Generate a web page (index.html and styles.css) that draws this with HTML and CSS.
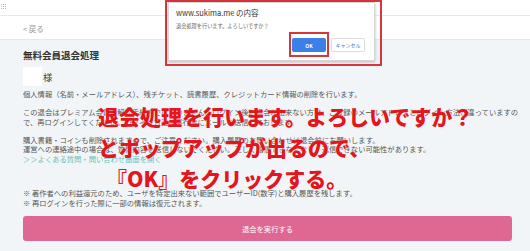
FILE: index.html
```html
<!DOCTYPE html>
<html lang="ja">
<head>
<meta charset="UTF-8">
<title>無料会員退会処理</title>
<meta name="viewport" content="width=device-width, initial-scale=1.0">
<link rel="stylesheet" href="styles.css">
</head>
<body>
<div class="topbar">
<svg class="apps" width="5" height="5" viewBox="0 0 5 5">
<g fill="#b9b9b9">
<rect x="0" y="0" width="1" height="1"/><rect x="2" y="0" width="1" height="1"/><rect x="4" y="0" width="1" height="1"/>
<rect x="0" y="2" width="1" height="1"/><rect x="2" y="2" width="1" height="1"/><rect x="4" y="2" width="1" height="1"/>
<rect x="0" y="4" width="1" height="1"/><rect x="2" y="4" width="1" height="1"/><rect x="4" y="4" width="1" height="1"/>
</g>
</svg>
</div>
<div class="backbar"><span class="back">&lt; 戻る</span></div>

<main class="content">
<h1 class="title">無料会員退会処理</h1>
<div class="name-row"><span class="name-box"></span><span class="sama">様</span></div>

<p class="text">個人情報（名前・メールアドレス）、残チケット、読書履歴、クレジットカード情報の削除を行います。</p>
<p class="text gap">この退会はプレミアム会員の解約手続きではありません。ログイン後に退会が出来ない方は、ご登録のメールアドレスとログイン方法が違っていますの<br>で、再ログインしてください。ログイン方法は実行時にメールを送信しております。</p>
<p class="text gap">購入書籍・コインも削除されますので、ご注意ください。購入履歴のお問い合わせは退会前にお願いします。<br>運営への連絡途中の場合は、質問内容を送信しないでください。正しく返信できなくなり、返信できない可能性があります。<br><span class="link">＞＞よくある質問・問い合わせ画面を開く</span></p>

<p class="text notes">※ 著作者への利益還元のため、ユーザを特定出来ない範囲でユーザーID(数字)と購入履歴を残します。<br>※ 再ログインを行った際に一部の情報は復元されます。</p>

<button class="withdraw">退会を実行する</button>
</main>

<!-- ブラウザの確認ダイアログ（赤枠付き） -->
<div class="callout">
<div class="dialog">
<div class="dialog-title">www.sukima.me の内容</div>
<div class="dialog-msg">退会処理を行います。よろしいですか？</div>
<div class="dialog-buttons">
<span class="ok-mark"><button class="btn-ok">OK</button></span>
<button class="btn-cancel">キャンセル</button>
</div>
</div>
</div>

<div class="annotation">
<p>退会処理を行います。よろしいですか？</p>
<p>とポップアップが出るので、</p>
<p class="indent">『OK』をクリックする。</p>
</div>
</body>
</html>
```

FILE: styles.css
```css
html {
background: #f2f5f8;
}

body {
margin: 0;
height: 251px;
overflow: hidden;
font-family: "Noto Sans CJK JP", "Noto Sans", sans-serif;
color: #555;
position: relative;
}

.topbar {
height: 16px;
background: white;
border-bottom: 1px solid #e8e8e8;
display: flex;
align-items: center;
padding-left: 1px;
box-sizing: border-box;
}

.apps {
display: block;
margin-top: -2px;
}

.backbar {
height: 24px;
background: white;
border-bottom: 1px solid #e6e9ec;
display: flex;
align-items: center;
padding-left: 23px;
box-sizing: border-box;
}

.back {
font-size: 7.5px;
color: #999;
padding-top: 2px;
}

.content {
padding: 9px 18px 0 23px;
}

.title {
font-size: 9.5px;
line-height: 12px;
font-weight: bold;
color: #333;
margin: 0;
}

.name-row {
display: flex;
align-items: center;
margin-top: 6px;
}

.name-box {
width: 19px;
height: 19px;
background: white;
}

.sama {
font-size: 9.5px;
color: #444;
margin-left: 1px;
}

.text {
font-size: 7.3px;
line-height: 9.5px;
margin: 4px 0 0;
white-space: nowrap;
}

.gap {
margin-top: 8.5px;
}

.link {
color: #63c2bc;
}

.notes {
margin-top: 24px;
line-height: 10px;
}

.withdraw {
display: block;
width: 100%;
height: 25px;
margin-top: 8px;
border: none;
border-radius: 3px;
background: #de6891;
color: white;
font-family: inherit;
font-size: 7.3px;
}

/* 確認ダイアログ */
.callout {
position: absolute;
left: 165px;
top: 0;
width: 217px;
height: 66px;
box-sizing: border-box;
border: 2px solid #d8363d;
padding: 0 5px 3px 1px;
}

.dialog {
height: 100%;
box-sizing: border-box;
background: white;
border: 1px solid #d6d6d6;
box-shadow: 0 1px 3px rgba(0,0,0,0.25);
padding: 5px 9px 3px 7px;
}

.dialog-title {
font-size: 7.5px;
line-height: 10px;
color: #333;
}

.dialog-msg {
font-size: 5.2px;
line-height: 8px;
color: #666;
margin-top: 4px;
}

.dialog-buttons {
display: flex;
justify-content: flex-end;
align-items: center;
gap: 2px;
margin-top: 2px;
}

.ok-mark {
display: flex;
border: 2px solid #d8363d;
padding: 4px 1px 3px;
}

.btn-ok, .btn-cancel {
width: 34px;
height: 14px;
padding: 0;
font-family: inherit;
font-size: 5px;
border-radius: 2px;
}

.btn-ok {
background: #3b80e6;
color: white;
border: none;
font-weight: bold;
}

.btn-cancel {
background: white;
color: #3b6fcf;
border: 1px solid #dcdcdc;
}

/* 注釈 */
.annotation {
position: absolute;
left: 98px;
top: 101px;
}

.annotation p {
margin: 0;
font-size: 21px;
line-height: 31px;
font-weight: 900;
color: #e3151d;
white-space: nowrap;
text-shadow: 0 0 1px white;
}

.annotation .indent {
margin-left: 8px;
}
```
